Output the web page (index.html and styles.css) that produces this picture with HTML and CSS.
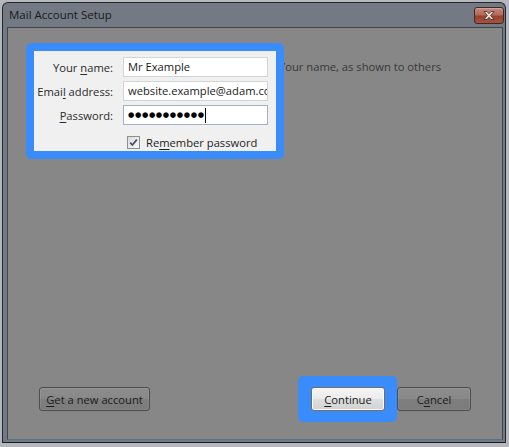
FILE: index.html
```html
<!DOCTYPE html>
<html lang="en">
<head>
<meta charset="utf-8">
<title>Mail Account Setup</title>
<link rel="stylesheet" href="styles.css">
</head>
<body>
<div class="window">
  <div class="titlebar">
    <span class="title">Mail Account Setup</span>
    <button class="close" aria-label="Close">
      <svg width="12" height="9" viewBox="0 0 12 9" aria-hidden="true">
        <path d="M1 0.5 H4 L6 2.7 L8 0.5 H11 L7.6 4.5 L11 8.5 H8 L6 6.3 L4 8.5 H1 L4.4 4.5 Z" fill="#e4e0de" stroke="#4a2c25" stroke-width="0.8" stroke-linejoin="round"/>
      </svg>
    </button>
  </div>
  <div class="client">
    <div class="top">
      <div class="spot spot-form">
        <div class="form">
          <label class="lbl">Your <u>n</u>ame:</label>
          <div class="field">Mr Example</div>
          <label class="lbl">Emai<u>l</u> address:</label>
          <div class="field">website.example@adam.co.uk</div>
          <label class="lbl"><u>P</u>assword:</label>
          <div class="field focused"><span class="dots">●●●●●●●●●●●</span><span class="caret"></span></div>
          <div class="check-row">
            <span class="checkbox">
              <svg width="11" height="11" viewBox="0 0 11 11" aria-hidden="true">
                <path d="M2.2 5.6 L4.4 8 L8.8 2.6" fill="none" stroke="#3e4c70" stroke-width="1.7"/>
              </svg>
            </span>
            <span>Re<u>m</u>ember password</span>
          </div>
        </div>
      </div>
      <span class="hint">Your name, as shown to others</span>
    </div>
    <div class="actions">
      <button class="btn dim wide"><u>G</u>et a new account</button>
      <div class="right">
        <div class="spot spot-btn"><button class="btn primary"><u>C</u>ontinue</button></div>
        <button class="btn dim">C<u>a</u>ncel</button>
      </div>
    </div>
  </div>
</div>
</body>
</html>
```

FILE: styles.css
```css
* { box-sizing: border-box; }

html, body { margin: 0; }

body {
  width: 509px;
  height: 447px;
  overflow: hidden;
  background: #b4b8bc;
  font-family: "Open Sans", "Noto Sans", sans-serif;
  font-size: 11.2px;
  color: #1b1b1b;
}

/* dialog frame */
.window {
  margin: 2px 0 0 2px;
  width: 504px;
  border: 1px solid #24282c;
  border-bottom-color: #1c1f22;
  border-radius: 6px 6px 0 0;
  background: #737a84;
  display: flex;
  flex-direction: column;
}

.titlebar {
  height: 24px;
  display: flex;
  align-items: flex-start;
  justify-content: space-between;
  padding: 0 1px 0 6px;
}

.title {
  font-size: 11.5px;
  line-height: 24px;
  color: #17191c;
}

.close {
  margin-top: 4px;
  width: 30px;
  height: 17px;
  padding: 0;
  border: 1px solid #3e2a24;
  border-radius: 3px;
  background: linear-gradient(#c3897b 0%, #b16a5a 45%, #983f2e 55%, #a65342 100%);
  box-shadow: inset 0 1px 0 rgba(255, 255, 255, 0.25);
  display: flex;
  align-items: center;
  justify-content: center;
}

.client {
  margin: 0 2px 2px 4px;
  height: 413px;
  border: 1px solid #40464c;
  border-bottom-color: #4f7686;
  background: #878787;
  display: flex;
  flex-direction: column;
  justify-content: space-between;
}

/* highlight boxes */
.spot {
  background: #3b8cfb;
  border-radius: 5px;
  position: relative;
  z-index: 1;
}

.spot-form { padding: 8px; }

.spot-btn { padding: 11px 12px 11px 13px; }

.top {
  display: flex;
  align-items: flex-start;
  padding: 15px 0 0 18px;
}

.form {
  width: 242px;
  height: 100px;
  background: #f0f0f0;
  display: grid;
  grid-template-columns: 79px 145px;
  grid-auto-rows: 20px;
  column-gap: 10px;
  row-gap: 4px;
  align-items: center;
  padding-top: 6px;
}

.lbl {
  text-align: right;
  color: #2a2a2a;
  white-space: nowrap;
}

u { text-underline-offset: 2px; }

.field {
  height: 20px;
  line-height: 18px;
  padding: 0 0 0 4px;
  background: #ffffff;
  border: 1px solid #d2d4d6;
  color: #1a1a1a;
  white-space: nowrap;
  overflow: hidden;
  display: flex;
  align-items: center;
}

.field.focused { border-color: #9fb2c8; }

.dots {
  font-family: "DejaVu Sans", sans-serif;
  font-size: 7.3px;
  letter-spacing: 0.6px;
  color: #000;
}

.caret {
  width: 1px;
  height: 15px;
  background: #000;
}

.check-row {
  grid-column: 2;
  display: flex;
  align-items: center;
  padding-left: 4px;
  margin-top: 6px;
  color: #1d1d1d;
}

.checkbox {
  width: 13px;
  height: 13px;
  margin-right: 6px;
  border: 1px solid #8e8f8f;
  background: linear-gradient(135deg, #dcdcdc, #f8f8f8);
  display: flex;
  align-items: center;
  justify-content: center;
}

.hint {
  margin: 14px 0 0 -5px;
  line-height: 20px;
  color: #383838;
  white-space: nowrap;
}

/* bottom buttons */
.actions {
  display: flex;
  justify-content: space-between;
  align-items: center;
  padding: 0 31px 17px 31px;
}

.right {
  display: flex;
  align-items: center;
}

.btn {
  height: 24px;
  width: 74px;
  padding: 0;
  border-radius: 3px;
  font: inherit;
  display: block;
}

.btn.wide { width: 111px; }

.dim {
  border: 1px solid #4d4d4d;
  background: linear-gradient(#8d8d8d 0%, #888888 48%, #7e7e7e 52%, #7b7b7b 100%);
  box-shadow: inset 0 0 0 1px rgba(255, 255, 255, 0.08);
  color: #1c1c1c;
}

.primary {
  border: 1px solid #707070;
  background: linear-gradient(#f4f4f4 0%, #ececec 48%, #dedede 52%, #d2d2d2 100%);
  box-shadow: inset 0 0 0 1px #fbfbfb;
  color: #1a1a1a;
}
```
